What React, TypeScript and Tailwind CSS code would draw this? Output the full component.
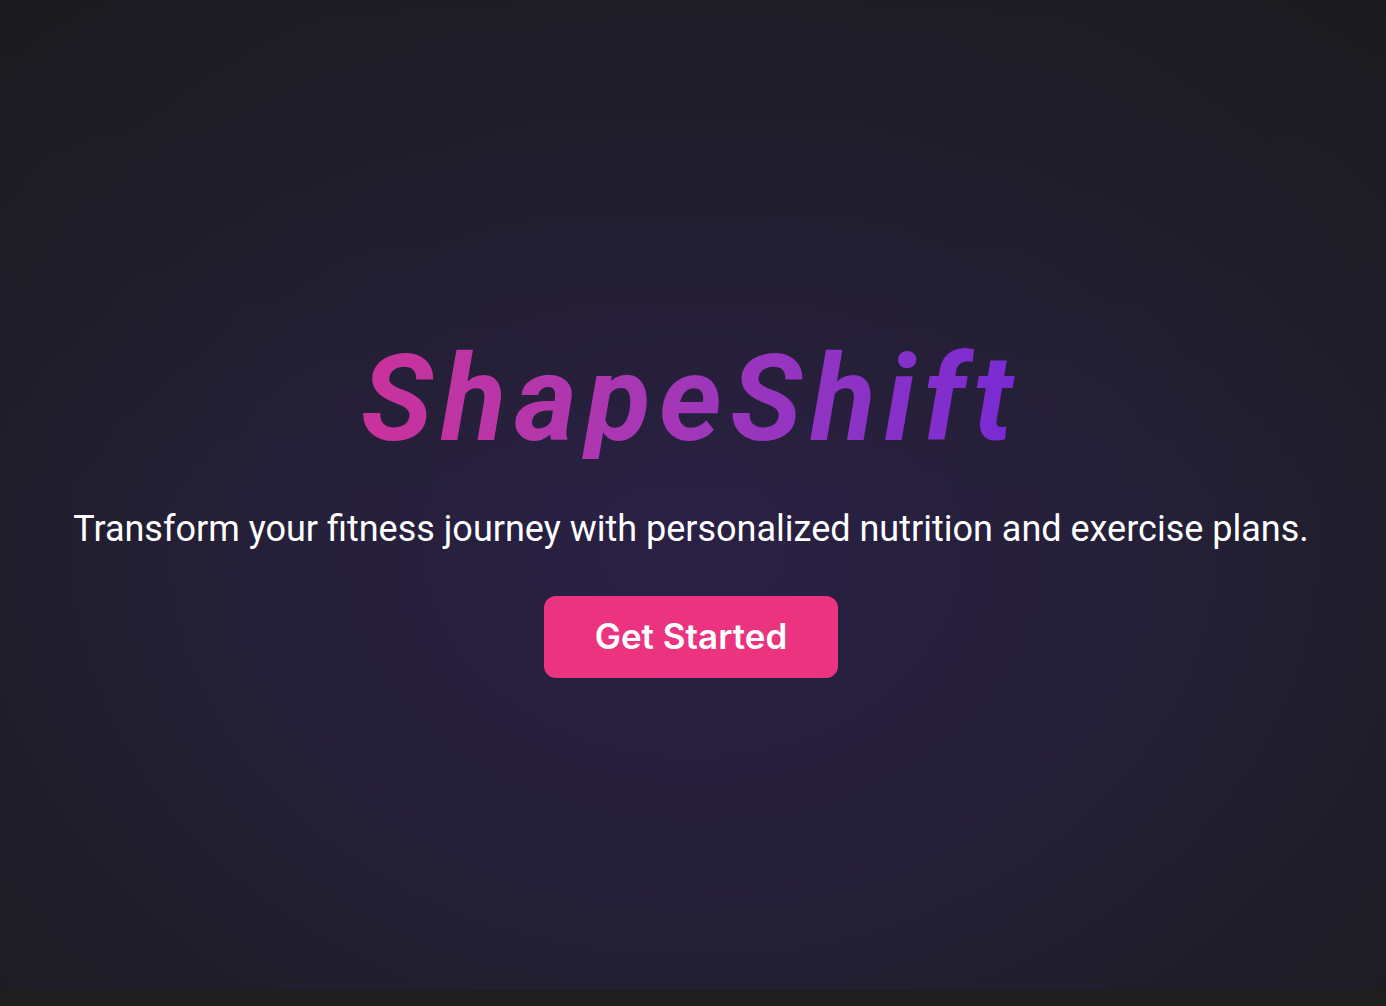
export default function App() {
  return (
    <div className="min-h-screen bg-[#1e1e1e]">
      <section className="relative h-[990px] flex flex-col items-center justify-center bg-[radial-gradient(ellipse_at_50%_55%,#2a2045_0%,#252038_45%,#1c1b1f_100%)]">
        <div className="absolute inset-0 bg-gradient-to-b from-[#1b1a1f]/50 via-transparent to-transparent pointer-events-none" />
        <div className="relative flex flex-col items-center mt-[26px]">
          <h1
            className="text-[120px] leading-none font-bold italic tracking-[0.07em] bg-gradient-to-r from-[#cb319b] to-[#7829d3] bg-clip-text text-transparent -ml-[4px]"
            style={{ fontFamily: "Roboto, sans-serif" }}
          >
            ShapeShift
          </h1>
          <p
            className="mt-[48px] text-[36px] leading-tight text-white -ml-[4px]"
            style={{ fontFamily: "Roboto, sans-serif" }}
          >
            Transform your fitness journey with personalized nutrition and exercise plans.
          </p>
          <button
            className="mt-[44px] w-[294px] h-[82px] rounded-xl bg-[#eb337f] text-white text-[35px] font-semibold -ml-[4px]"
            style={{ fontFamily: "Inter, sans-serif" }}
          >
            Get Started
          </button>
        </div>
      </section>
    </div>
  );
}
